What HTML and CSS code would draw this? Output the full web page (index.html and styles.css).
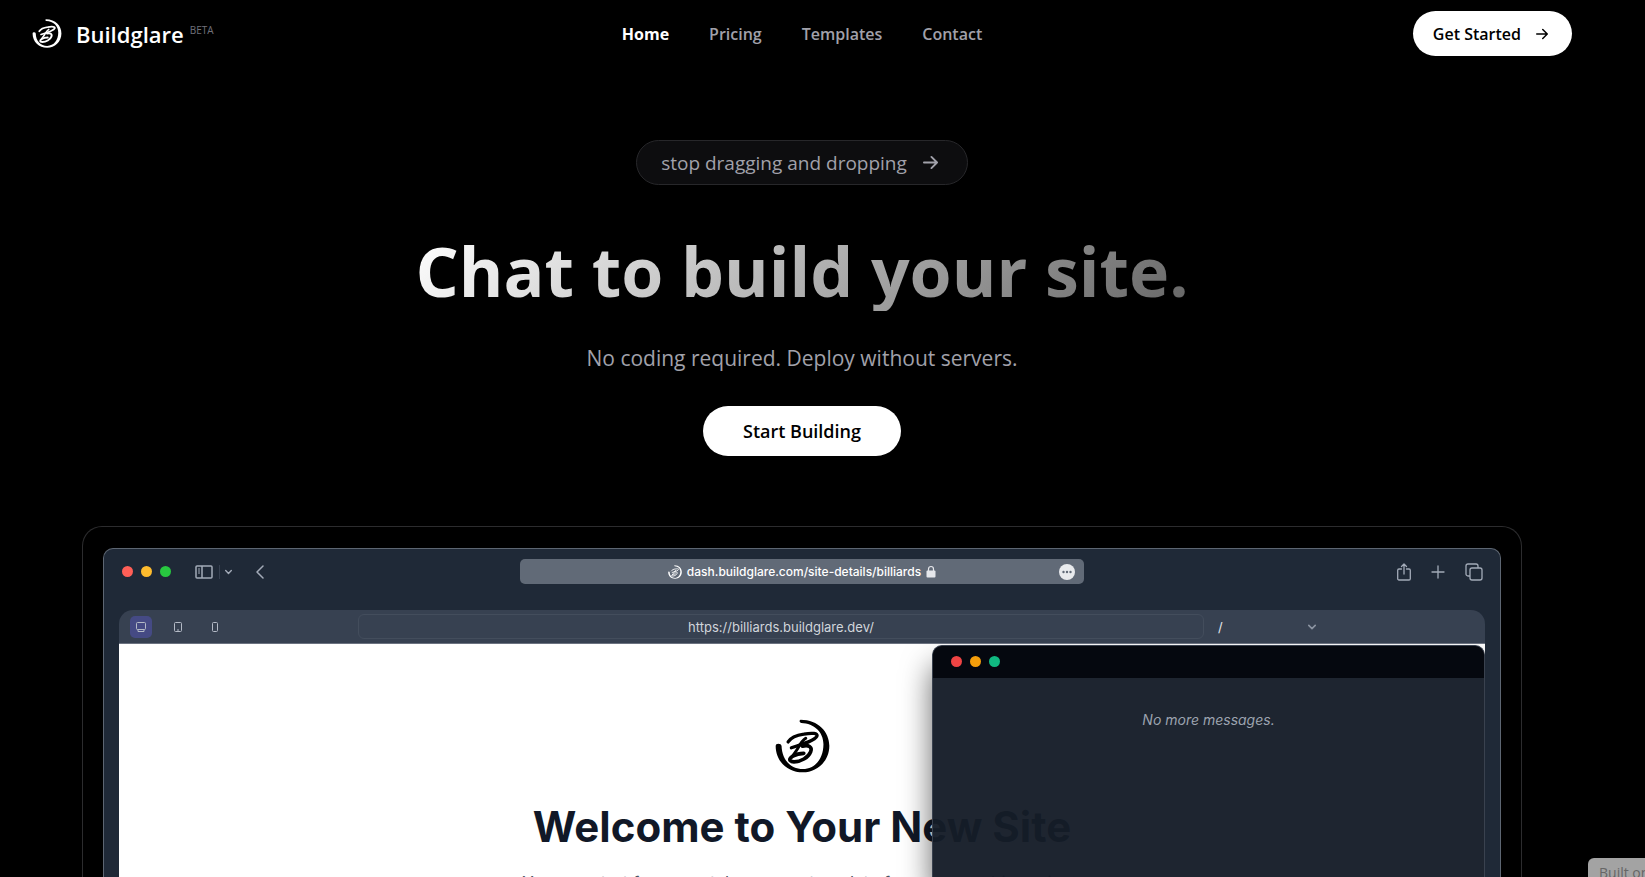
FILE: index.html
```html
<!DOCTYPE html>
<html lang="en">
<head>
  <meta charset="UTF-8" />
  <meta name="viewport" content="width=device-width, initial-scale=1.0"/>
  <title>Buildglare</title>
  <link rel="stylesheet" href="styles.css">
</head>
<body>
  <svg class="sprite" width="0" height="0" aria-hidden="true">
    <symbol id="logo" viewBox="102 55 168 165">
      <path fill="currentColor" d="M180 57C235 57 268 95 268 137C268 185 230 218 187 218C140 218 104 185 104 137Q104 131 112 131Q121 131 122 137C123 180 150 208 187 208C225 208 250 175 250 132C250 95 222 68 182 67Q177 66 177 62Q177 57 180 57Z"/>
      <g fill="none" stroke="currentColor" stroke-width="10" stroke-linecap="round" stroke-linejoin="round">
        <path d="M142 125C150 112 168 104 190 101C215 97 235 98 230 108C224 120 194 130 152 143"/>
        <path d="M186 138C204 133 217 140 211 155C204 173 180 186 160 186C144 185 143 177 156 169C166 163 180 160 190 160" stroke-width="11"/>
        <path d="M196 114C188 119 180 130 174 141C168 152 160 161 153 172" stroke-width="9"/>
      </g>
    </symbol>
    <symbol id="arrow" viewBox="0 0 16 16">
      <path fill="none" stroke="currentColor" stroke-width="2" stroke-linecap="round" stroke-linejoin="round" d="M1 8h14M9 2l6 6-6 6"/>
    </symbol>
    <symbol id="chevron" viewBox="0 0 10 10">
      <path fill="none" stroke="currentColor" stroke-width="2" stroke-linecap="round" stroke-linejoin="round" d="M1 3l4 4 4-4"/>
    </symbol>
  </svg>

  <header>
    <a class="logo" href="#">
      <svg class="logo-icon"><use href="#logo"/></svg>
      <span class="logo-text">Buildglare</span>
      <span class="beta">BETA</span>
    </a>
    <nav>
      <ul>
        <li><a class="active" href="#">Home</a></li>
        <li><a href="#">Pricing</a></li>
        <li><a href="#">Templates</a></li>
        <li><a href="#">Contact</a></li>
      </ul>
    </nav>
    <div class="header-right">
      <button class="btn get-started" type="button">Get Started <svg><use href="#arrow"/></svg></button>
    </div>
  </header>

  <main>
    <section class="hero">
      <a class="pill" href="#">stop dragging and dropping <svg><use href="#arrow"/></svg></a>
      <h1>Chat to build your site.</h1>
      <p>No coding required. Deploy without servers.</p>
      <button class="btn start" type="button">Start Building</button>
    </section>

    <section class="showcase">
      <div class="browser">
        <div class="browser-bar">
          <div class="bar-left">
            <div class="dots"><span class="red"></span><span class="yellow"></span><span class="green"></span></div>
            <svg class="sidebar-icon" viewBox="0 0 18 14" fill="none" stroke="currentColor"><rect x="1" y="1" width="16" height="12" rx="1" stroke-width="1.5"/><path d="M7 1v12" stroke-width="1.5"/><path d="M3 4h2M3 6h2M3 8h2"/></svg>
            <span class="divider"></span>
            <svg class="down-icon"><use href="#chevron"/></svg>
            <svg class="back-icon" viewBox="0 0 8 14" fill="none" stroke="currentColor" stroke-width="1.5" stroke-linecap="round" stroke-linejoin="round"><path d="M7 1L1 7l6 6"/></svg>
          </div>
          <div class="address">
            <span></span>
            <div class="address-text">
              <svg class="site-icon"><use href="#logo"/></svg>
              <span>dash.buildglare.com/site-details/billiards</span>
              <svg class="lock" viewBox="0 0 10 13"><path d="M2.500 6V4a2.500 2.500 0 0 1 5 0v2" fill="none" stroke="currentColor" stroke-width="1.200"/><rect x="0.500" y="5.500" width="9" height="7" rx="1" fill="currentColor"/></svg>
            </div>
            <svg class="more" viewBox="0 0 16 16"><circle cx="8" cy="8" r="8" fill="#e8eaed"/><g fill="#616a77"><circle cx="4.500" cy="8" r="1.200"/><circle cx="8" cy="8" r="1.200"/><circle cx="11.500" cy="8" r="1.200"/></g></svg>
          </div>
          <div class="bar-right">
            <svg width="14" height="18" viewBox="0 0 14 18" fill="none" stroke="currentColor" stroke-width="1.300" stroke-linecap="round" stroke-linejoin="round"><path d="M4.500 6H2a1.300 1.300 0 0 0-1.300 1.300v8.400A1.300 1.300 0 0 0 2 17h10a1.300 1.300 0 0 0 1.300-1.300V7.300A1.300 1.300 0 0 0 12 6H9.500M7 11V1M4.500 3.500L7 1l2.500 2.500"/></svg>
            <svg width="14" height="14" viewBox="0 0 14 14" fill="none" stroke="currentColor" stroke-width="1.300" stroke-linecap="round"><path d="M7 1v12M1 7h12"/></svg>
            <svg width="18" height="18" viewBox="0 0 18 18" fill="none" stroke="currentColor" stroke-width="1.300" stroke-linejoin="round"><rect x="5" y="5" width="12" height="12" rx="2"/><path d="M5 13H3a2 2 0 0 1-2-2V3a2 2 0 0 1 2-2h8a2 2 0 0 1 2 2v2"/></svg>
          </div>
        </div>

        <div class="preview">
          <div class="preview-bar">
            <div class="devices">
              <button class="active" type="button" aria-label="Desktop"><svg viewBox="0 0 12 12" fill="none" stroke="currentColor"><rect x="1.500" y="1.500" width="9" height="7" rx="1"/><path d="M3 8.500v2h6v-2"/></svg></button>
              <button type="button" aria-label="Tablet"><svg viewBox="0 0 12 12" fill="none" stroke="currentColor"><rect x="2.500" y="1.500" width="7" height="9" rx="1"/><path d="M5 9h2"/></svg></button>
              <button type="button" aria-label="Phone"><svg viewBox="0 0 12 12" fill="none" stroke="currentColor"><rect x="3.500" y="1.500" width="5" height="9" rx="1"/></svg></button>
            </div>
            <input class="url" type="text" aria-label="Site address" value="https://billiards.buildglare.dev/">
            <button class="route" type="button">/ <svg><use href="#chevron"/></svg></button>
          </div>
          <div class="page">
            <svg class="page-logo"><use href="#logo"/></svg>
            <h2>Welcome to Your New Site</h2>
            <p>You can start from scratch or use a template for your next big project.</p>
            <div class="chat">
              <div class="chat-bar"><div class="dots"><span class="red"></span><span class="yellow"></span><span class="green"></span></div></div>
              <div class="chat-body"><em>No more messages.</em></div>
            </div>
          </div>
        </div>
      </div>
    </section>
  </main>

  <a class="built-on" href="#">Built on</a>
</body>
</html>
```

FILE: styles.css
```css
* {
  box-sizing: border-box;
}
body {
  font-family: 'Open Sans', 'Noto Sans', sans-serif;
  margin: 0;
  padding-right: 41px;
  height: 100vh;
  overflow: hidden;
  background: #000;
  color: white;
  display: flex;
  flex-direction: column;
}
a {
  color: inherit;
  text-decoration: none;
}
svg {
  display: block;
  flex: none;
}
.sprite {
  position: absolute;
}

header {
  display: grid;
  grid-template-columns: 1fr auto 1fr;
  align-items: center;
  padding: 11px 32px;
}
.logo {
  display: flex;
  align-items: center;
}
.logo-icon {
  width: 30px;
  height: 29px;
}
.logo-text {
  font-size: 22px;
  font-weight: 600;
  line-height: 28px;
  margin-left: 14px;
}
.beta {
  font-size: 10px;
  line-height: 12px;
  color: #71717a;
  margin: 0 0 8px 6px;
}
ul {
  list-style: none;
  display: flex;
  gap: 40px;
  margin: 0;
  padding: 0;
}
ul li a {
  font-size: 16px;
  line-height: 24px;
  font-weight: 600;
  color: #a1a1aa;
}
ul li a.active {
  color: white;
  font-weight: 700;
}
.header-right {
  display: flex;
  justify-content: flex-end;
}
.btn {
  font-family: inherit;
  font-weight: 600;
  background: white;
  color: black;
  border: none;
  border-radius: 25px;
  cursor: pointer;
}
.get-started {
  display: flex;
  align-items: center;
  gap: 15px;
  height: 45px;
  padding: 0 24px 0 20px;
  font-size: 16px;
}
.get-started svg {
  width: 12px;
  height: 12px;
}

main {
  flex: 1;
  min-height: 0;
  display: flex;
  flex-direction: column;
}
.hero {
  display: flex;
  flex-direction: column;
  align-items: center;
  padding-top: 73px;
}
.pill {
  display: flex;
  align-items: center;
  gap: 16px;
  height: 45px;
  padding: 0 29px 0 24px;
  border: 1px solid #27272a;
  border-radius: 23px;
  background: #0d0d0f;
  color: #a1a1aa;
  font-size: 19px;
}
.pill svg {
  width: 15px;
  height: 15px;
}
h1 {
  margin: 46px 0 0;
  font-size: 68px;
  line-height: 80px;
  font-weight: 700;
  background: linear-gradient(135deg, #fff, #666);
  background-clip: text;
  -webkit-background-clip: text;
  color: transparent;
}
.hero p {
  margin: 31px 0 32px;
  font-size: 21px;
  line-height: 32px;
  color: #a1a1aa;
}
.start {
  height: 50px;
  padding: 0 40px;
  font-size: 18px;
}

.showcase {
  flex: 1;
  min-height: 0;
  display: flex;
  margin: 70px 82px 0;
  padding: 21px 20px 0;
  border: 1px solid #2c2c2e;
  border-bottom: none;
  border-radius: 20px 20px 0 0;
}
.browser {
  flex: 1;
  min-width: 0;
  display: flex;
  flex-direction: column;
  font-family: Inter, sans-serif;
  background: #1f2937;
  border: 1px solid #5d6672;
  border-bottom: none;
  border-radius: 10px 10px 0 0;
  padding: 0 15px;
}
.browser-bar {
  display: grid;
  grid-template-columns: 1fr 564px 1fr;
  align-items: center;
  height: 45px;
  margin-bottom: 16px;
  color: #a3abb8;
}
.bar-left {
  display: flex;
  align-items: center;
  padding-left: 3px;
}
.dots {
  display: flex;
  gap: 8px;
}
.dots span {
  width: 11px;
  height: 11px;
  border-radius: 50%;
}
.dots .red {
  background: #ff5f57;
}
.dots .yellow {
  background: #febc2e;
}
.dots .green {
  background: #28c840;
}
.sidebar-icon {
  width: 18px;
  height: 14px;
  margin-left: 24px;
}
.divider {
  width: 1px;
  height: 14px;
  margin: 0 5px 0 6px;
  background: #374151;
}
.down-icon {
  width: 7px;
  height: 8px;
}
.back-icon {
  width: 8px;
  height: 14px;
  margin-left: 24px;
}
.address {
  display: grid;
  grid-template-columns: 1fr auto 1fr;
  align-items: center;
  height: 25px;
  padding: 0 9px;
  border-radius: 5px;
  background: #616a77;
  color: white;
}
.address-text {
  display: flex;
  align-items: center;
  gap: 5px;
  font-size: 12px;
  font-weight: 500;
}
.site-icon {
  width: 14px;
  height: 14px;
}
.lock {
  width: 10px;
  height: 13px;
  color: #e5e7eb;
}
.more {
  width: 16px;
  height: 16px;
  justify-self: end;
}
.bar-right {
  display: flex;
  align-items: center;
  justify-content: flex-end;
  gap: 20px;
  padding-right: 2px;
}

.preview {
  flex: 1;
  min-height: 0;
  display: flex;
  flex-direction: column;
}
.preview-bar {
  display: flex;
  align-items: center;
  height: 34px;
  padding-left: 11px;
  border-bottom: 1px solid #6b7280;
  border-radius: 14px 14px 0 0;
  background: #374151;
}
.devices {
  display: flex;
  gap: 15px;
  width: 228px;
}
.devices button {
  width: 22px;
  height: 22px;
  padding: 5px;
  border: none;
  border-radius: 5px;
  background: none;
  color: #b4bac6;
}
.devices button.active {
  background: #454a84;
}
.url {
  flex: 1;
  min-width: 0;
  height: 25px;
  padding: 0;
  margin: 0;
  border: 1px solid #434d5c;
  border-radius: 6px;
  background: none;
  color: #d1d5db;
  font-family: inherit;
  font-size: 13px;
  text-align: center;
}
.route {
  display: flex;
  align-items: center;
  justify-content: space-between;
  width: 98px;
  margin: 0 169px 0 14px;
  padding: 0;
  border: none;
  background: none;
  color: #e5e7eb;
  font-family: inherit;
  font-size: 13px;
}
.route svg {
  width: 8px;
  height: 8px;
  color: #8b93a1;
}
.page {
  flex: 1;
  min-height: 0;
  position: relative;
  display: flex;
  flex-direction: column;
  align-items: center;
  overflow: hidden;
  padding-top: 75px;
  background: white;
  color: #111827;
}
.page-logo {
  width: 55px;
  height: 54px;
  color: black;
}
h2 {
  margin: 28px 0 18px;
  font-size: 42px;
  line-height: 52px;
  font-weight: 700;
}
.page p {
  margin: 0;
  font-size: 17px;
  line-height: 24px;
  color: #4b5563;
}
/* floating chat window over the preview */
.chat {
  position: absolute;
  top: 1px;
  right: 0;
  bottom: 0;
  width: 553px;
  display: flex;
  flex-direction: column;
  border: 1px solid #3a424f;
  border-bottom: none;
  border-radius: 10px 10px 0 0;
  background: rgba(21, 28, 40, 0.96);
  box-shadow: 0 20px 30px rgba(0, 0, 0, 0.6);
}
.chat-bar {
  height: 32px;
  padding: 10px 18px;
  border-radius: 9px 9px 0 0;
  background: #05080f;
}
.chat .red {
  background: #ef4444;
}
.chat .yellow {
  background: #f59e0b;
}
.chat .green {
  background: #10b981;
}
.chat-body {
  padding-top: 32px;
  text-align: center;
  font-size: 14px;
  line-height: 20px;
  color: #9ca3af;
}

.built-on {
  position: fixed;
  right: 0;
  bottom: 0;
  width: 57px;
  height: 19px;
  padding-left: 11px;
  overflow: hidden;
  white-space: nowrap;
  border-radius: 6px 0 0 0;
  background: #a3a3a3;
  color: #666;
  font-size: 14px;
  line-height: 30px;
}
```
